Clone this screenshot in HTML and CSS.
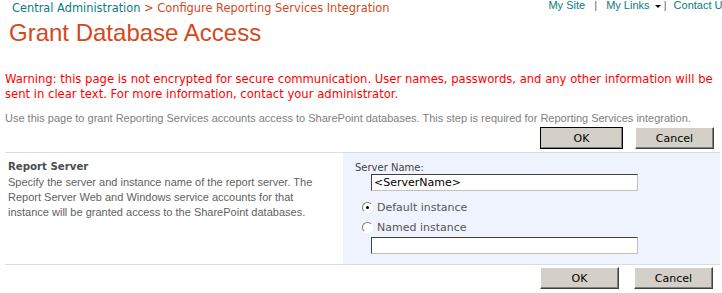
FILE: index.html
```html
<!DOCTYPE html>
<html lang="en">

<head>
    <meta charset="UTF-8">
    <title>Grant Database Access</title>
    <link rel="stylesheet" href="styles.css">
</head>

<body>
    <div class="topbar">
        <div class="titles">
            <div class="breadcrumb">
                <a href="#">Central Administration</a>
                <span class="sep">&gt;</span>
                <span class="current">Configure Reporting Services Integration</span>
            </div>
            <h1>Grant Database Access</h1>
        </div>
        <div class="toplinks">
            <a href="#">My Site</a>
            <span class="bar first">|</span>
            <a href="#">My Links</a>
            <span class="arrow"></span>
            <span class="bar">|</span>
            <a href="#">Contact Us</a>
        </div>
    </div>

    <p class="warning">Warning: this page is not encrypted for secure communication. User names, passwords, and any other information will be sent in clear text. For more information, contact your administrator.</p>

    <p class="intro">Use this page to grant Reporting Services accounts access to SharePoint databases. This step is required for Reporting Services integration.</p>

    <div class="buttons top">
        <button class="btn default">OK</button>
        <button class="btn">Cancel</button>
    </div>

    <!-- report server section -->
    <div class="section">
        <div class="section-info">
            <h3>Report Server</h3>
            <p>Specify the server and instance name of the report server. The Report Server Web and Windows service accounts for that instance will be granted access to the SharePoint databases.</p>
        </div>
        <div class="section-controls">
            <label class="field-label">Server Name:</label>
            <input class="text-input" type="text" value="&lt;ServerName&gt;">
            <label class="radio-row first"><span class="radio checked"></span>Default instance</label>
            <label class="radio-row"><span class="radio"></span>Named instance</label>
            <input class="text-input" type="text" value="">
        </div>
    </div>

    <div class="buttons bottom">
        <button class="btn">OK</button>
        <button class="btn">Cancel</button>
    </div>
</body>

</html>
```

FILE: styles.css
```css
* {
    margin: 0;
    padding: 0;
    box-sizing: border-box;
}

body {
    background: white;
    font-family: 'Liberation Sans', Arial, sans-serif;
    font-size: 11px;
    padding: 0 2px 0 5px;
    overflow: hidden;
}

a {
    text-decoration: none;
}

.topbar {
    display: flex;
    justify-content: space-between;
}

.breadcrumb {
    font-family: 'DejaVu Sans', Verdana, sans-serif;
    font-size: 11.4px;
    padding: 1px 0 0 7px;
    height: 18px;
    white-space: nowrap;
}

.breadcrumb a {
    color: #0a7c80;
}

.breadcrumb .sep,
.breadcrumb .current {
    color: #d5481c;
}

h1 {
    font-family: 'Liberation Sans', Arial, sans-serif;
    font-weight: normal;
    font-size: 24px;
    color: #d5481c;
    padding-left: 4px;
    line-height: 30px;
}

.toplinks {
    white-space: nowrap;
    margin-right: -8px;
    color: #666;
    font-size: 11px;
    line-height: 10px;
}

.toplinks a {
    color: #0a7c80;
}

.toplinks .bar {
    margin: 0 4px 0 0;
}

.toplinks .bar.first {
    margin: 0 6px 0 6px;
}

.arrow {
    display: inline-block;
    width: 0;
    height: 0;
    border-left: 3px solid transparent;
    border-right: 3px solid transparent;
    border-top: 3px solid black;
    vertical-align: middle;
    margin-left: 2px;
}

.warning {
    font-family: 'DejaVu Sans', Verdana, sans-serif;
    font-size: 11.6px;
    color: #ff0000;
    line-height: 15px;
    margin-top: 24px;
}

.intro {
    color: #808080;
    margin-top: 9px;
    line-height: 14px;
}

.buttons {
    display: flex;
    justify-content: flex-end;
    gap: 12px;
    margin-right: 6px;
}

.buttons.top {
    margin-top: 2px;
    margin-bottom: 3px;
}

.btn {
    font-family: 'DejaVu Sans', Tahoma, sans-serif;
    font-size: 11px;
    width: 79px;
    height: 22px;
    background: #d4d0c8;
    color: black;
    border: 1px solid;
    border-color: #fff #404040 #404040 #fff;
    box-shadow: inset -1px -1px #808080;
}

.btn.default {
    width: 83px;
    outline: 1px solid black;
    outline-offset: -1px;
}

.section {
    display: flex;
    border-top: 1px solid #dcdcdc;
    border-bottom: 1px solid #dcdcdc;
}

.section-info {
    width: 338px;
    padding: 5px 20px 0 3px;
}

.section-info h3 {
    font-family: 'DejaVu Sans', Tahoma, sans-serif;
    font-size: 10.2px;
    color: #4c4c4c;
    line-height: 17px;
}

.section-info p {
    color: #5f5f5f;
    font-size: 11px;
    line-height: 15px;
}

.section-controls {
    flex: 1;
    background: #eef3fd;
    padding: 8px 0 10px 12px;
    display: flex;
    flex-direction: column;
    align-items: flex-start;
}

.field-label {
    font-family: 'DejaVu Sans', Tahoma, sans-serif;
    font-size: 10px;
    color: #444;
    line-height: 13px;
}

.text-input {
    width: 267px;
    height: 17px;
    margin-left: 16px;
    border: 1px solid;
    border-color: #404040 #c0c0c0 #c0c0c0 #404040;
    background: white;
    font-family: 'DejaVu Sans', Tahoma, sans-serif;
    font-size: 11px;
    padding: 0 2px;
    color: black;
}

.radio-row {
    display: flex;
    align-items: center;
    font-family: 'DejaVu Sans', Tahoma, sans-serif;
    font-size: 11px;
    color: #555;
    margin: 4px 0 0 7px;
    height: 16px;
}

.radio-row.first {
    margin-top: 8px;
}

.radio {
    width: 11px;
    height: 11px;
    border-radius: 50%;
    border: 1px solid #808080;
    border-right-color: #fff;
    border-bottom-color: #fff;
    background: white;
    margin-right: 4px;
    position: relative;
}

.radio.checked::after {
    content: "";
    position: absolute;
    left: 3px;
    top: 3px;
    width: 3px;
    height: 3px;
    border-radius: 50%;
    background: black;
}

.radio-row + .text-input {
    margin-top: 2px;
}

.buttons.bottom {
    margin-top: 2px;
    gap: 15px;
    margin-right: 7px;
}
```
